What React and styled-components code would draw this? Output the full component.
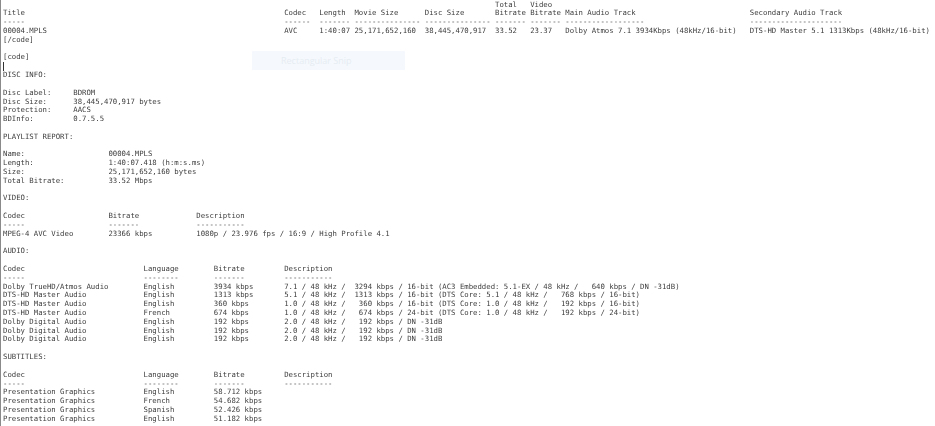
import { createGlobalStyle, styled } from "styled-components";

// pads each cell out to its column start, the last cell is left as is
const row = (columns, ...cells) =>
    cells
        .map((cell, i) => (i < cells.length - 1 ? cell.padEnd(columns[i + 1] - columns[i]) : cell))
        .join("");

const TOP = [0, 64, 72, 80, 96, 112, 120, 128, 170];
const INFO = [0, 16];
const PLAYLIST = [0, 24];
const VIDEO = [0, 24, 44];
const TRACKS = [0, 32, 48, 64];

const REPORT = [
    row([0, 112, 120], "", "Total", "Video"),
    row(TOP, "Title", "Codec", "Length", "Movie Size", "Disc Size", "Bitrate", "Bitrate", "Main Audio Track", "Secondary Audio Track"),
    row(TOP, "-----", "------", "-------", "---------------", "---------------", "-------", "-------", "------------------", "---------------------"),
    row(TOP, "00004.MPLS", "AVC", "1:40:07", "25,171,652,160", "38,445,470,917", "33.52", "23.37", "Dolby Atmos 7.1 3934Kbps (48kHz/16-bit)", "DTS-HD Master 5.1 1313Kbps (48kHz/16-bit)"),
    "[/code]",
    "",
    "[code]",
    "",
    "DISC INFO:",
    "",
    row(INFO, "Disc Label:", "BDROM"),
    row(INFO, "Disc Size:", "38,445,470,917 bytes"),
    row(INFO, "Protection:", "AACS"),
    row(INFO, "BDInfo:", "0.7.5.5"),
    "",
    "PLAYLIST REPORT:",
    "",
    row(PLAYLIST, "Name:", "00004.MPLS"),
    row(PLAYLIST, "Length:", "1:40:07.418 (h:m:s.ms)"),
    row(PLAYLIST, "Size:", "25,171,652,160 bytes"),
    row(PLAYLIST, "Total Bitrate:", "33.52 Mbps"),
    "",
    "VIDEO:",
    "",
    row(VIDEO, "Codec", "Bitrate", "Description"),
    row(VIDEO, "-----", "-------", "-----------"),
    row(VIDEO, "MPEG-4 AVC Video", "23366 kbps", "1080p / 23.976 fps / 16:9 / High Profile 4.1"),
    "",
    "AUDIO:",
    "",
    row(TRACKS, "Codec", "Language", "Bitrate", "Description"),
    row(TRACKS, "-----", "--------", "-------", "-----------"),
    row(TRACKS, "Dolby TrueHD/Atmos Audio", "English", "3934 kbps", "7.1 / 48 kHz /  3294 kbps / 16-bit (AC3 Embedded: 5.1-EX / 48 kHz /   640 kbps / DN -31dB)"),
    row(TRACKS, "DTS-HD Master Audio", "English", "1313 kbps", "5.1 / 48 kHz /  1313 kbps / 16-bit (DTS Core: 5.1 / 48 kHz /   768 kbps / 16-bit)"),
    row(TRACKS, "DTS-HD Master Audio", "English", "360 kbps", "1.0 / 48 kHz /   360 kbps / 16-bit (DTS Core: 1.0 / 48 kHz /   192 kbps / 16-bit)"),
    row(TRACKS, "DTS-HD Master Audio", "French", "674 kbps", "1.0 / 48 kHz /   674 kbps / 24-bit (DTS Core: 1.0 / 48 kHz /   192 kbps / 24-bit)"),
    row(TRACKS, "Dolby Digital Audio", "English", "192 kbps", "2.0 / 48 kHz /   192 kbps / DN -31dB"),
    row(TRACKS, "Dolby Digital Audio", "English", "192 kbps", "2.0 / 48 kHz /   192 kbps / DN -31dB"),
    row(TRACKS, "Dolby Digital Audio", "English", "192 kbps", "2.0 / 48 kHz /   192 kbps / DN -31dB"),
    "",
    "SUBTITLES:",
    "",
    row(TRACKS, "Codec", "Language", "Bitrate", "Description"),
    row(TRACKS, "-----", "--------", "-------", "-----------"),
    row(TRACKS, "Presentation Graphics", "English", "58.712 kbps"),
    row(TRACKS, "Presentation Graphics", "French", "54.682 kbps"),
    row(TRACKS, "Presentation Graphics", "Spanish", "52.426 kbps"),
    row(TRACKS, "Presentation Graphics", "English", "51.182 kbps"),
];

const App = () => {
    return (
        <Page>
            <GlobalStyle />
            <Report>
                {REPORT.map((line, i) => (
                    <ReportLine key={i}>{line}</ReportLine>
                ))}
            </Report>
            <Caret />
            <SnipLabel>Rectangular Snip</SnipLabel>
        </Page>
    );
};

const GlobalStyle = createGlobalStyle`
    html, body {
        margin: 0;
        background-color: white;
    }
`;

const Page = styled.div`
    position: relative;
    width: 935px;
    height: 426px;
    overflow: hidden;
    background-color: white;
    border-left: 1px solid #8a8a8a;
    box-sizing: border-box;
`;

const Report = styled.div`
    padding: 0.6px 0 0 2px;
    color: #3c3c3c;
    font-family: "DejaVu Sans Mono", "Liberation Mono", monospace;
    font-size: 7.31px;
    text-rendering: geometricPrecision;
    filter: blur(0.25px);
`;

const ReportLine = styled.pre`
    margin: 0;
    width: fit-content;
    height: 8.82px;
    font: inherit;
    line-height: 8.82px;
`;

const Caret = styled.span`
    position: absolute;
    left: 2px;
    top: 62px;
    width: 1px;
    height: 9px;
    background-color: #333;
`;

const SnipLabel = styled.div`
    position: absolute;
    left: 251px;
    top: 51px;
    width: 153px;
    height: 19px;
    padding-left: 29px;
    box-sizing: border-box;
    background-color: #f5f9fd;
    color: #e6ecf2;
    font-family: "Open Sans", sans-serif;
    font-size: 9px;
    line-height: 19px;
`;

export default App;
